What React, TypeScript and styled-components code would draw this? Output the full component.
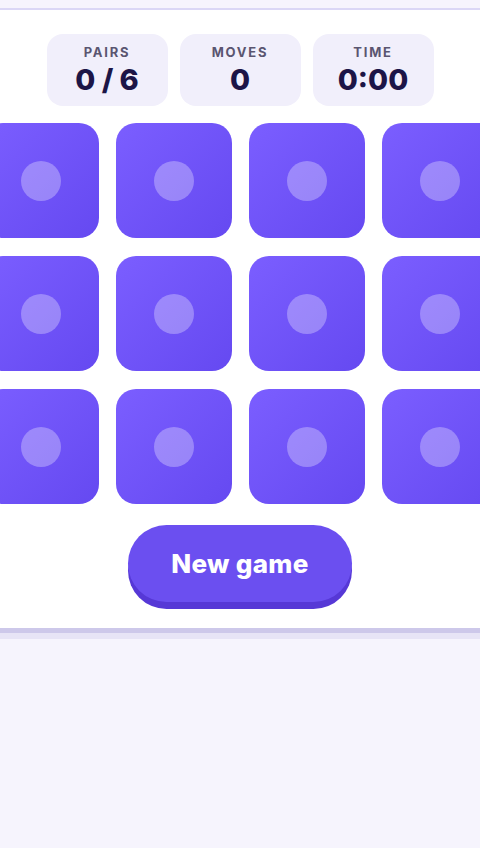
import React, { useState } from "react";
import styled, { createGlobalStyle } from "styled-components";

const GlobalStyle = createGlobalStyle`
  html, body {
    margin: 0;
    padding: 0;
    background: #f6f4fd;
    font-family: "Inter", "Noto Sans", sans-serif;
  }
`;

const Page = styled.div`
  padding-top: 8px;
  min-height: 848px;
  box-sizing: border-box;
  overflow: hidden;
`;

const Board = styled.section`
  background: #ffffff;
  border-top: 2px solid #dbd7f6;
  box-shadow: 0 5px 0 #cdc8ea, 0 11px 0 #e7e4f6;
  padding: 24px 0 26px;
  display: flex;
  flex-direction: column;
  align-items: center;
`;

const Stats = styled.div`
  display: flex;
  gap: 12px;
`;

const Stat = styled.div`
  width: 121px;
  height: 72px;
  border-radius: 16px;
  background: #f1effb;
  display: flex;
  flex-direction: column;
  align-items: center;
  justify-content: center;
  gap: 3px;
`;

const StatLabel = styled.span`
  font-size: 13px;
  font-weight: 700;
  letter-spacing: 1.8px;
  color: #5a5570;
  line-height: 16px;
`;

const StatValue = styled.span`
  font-size: 29px;
  font-weight: 800;
  color: #1c1547;
  line-height: 34px;
`;

const Grid = styled.div`
  margin-top: 17px;
  display: grid;
  grid-template-columns: repeat(4, 116px);
  grid-auto-rows: 115px;
  gap: 18px 17px;
  flex-shrink: 0;
`;

const Card = styled.button`
  border: none;
  padding: 0;
  border-radius: 20px;
  background: linear-gradient(135deg, #7b5eff 0%, #6549f1 100%);
  display: flex;
  align-items: center;
  justify-content: center;
  cursor: pointer;
`;

const Dot = styled.span`
  width: 40px;
  height: 40px;
  border-radius: 50%;
  background: rgba(255, 255, 255, 0.3);
`;

const NewGame = styled.button`
  margin-top: 21px;
  width: 224px;
  height: 77px;
  border: none;
  border-radius: 40px;
  background: #6b4ff0;
  box-shadow: 0 7px 0 #5638d6;
  color: #ffffff;
  font-family: inherit;
  font-size: 26px;
  font-weight: 800;
  letter-spacing: 0.3px;
  cursor: pointer;
`;

const App: React.FC = () => {
  const [cards] = useState(() => Array.from({ length: 12 }, (_, i) => i));

  return (
    <Page>
      <GlobalStyle />
      <Board>
        <Stats>
          <Stat>
            <StatLabel>PAIRS</StatLabel>
            <StatValue>0 / 6</StatValue>
          </Stat>
          <Stat>
            <StatLabel>MOVES</StatLabel>
            <StatValue>0</StatValue>
          </Stat>
          <Stat>
            <StatLabel>TIME</StatLabel>
            <StatValue>0:00</StatValue>
          </Stat>
        </Stats>
        <Grid>
          {cards.map((id) => (
            <Card key={id} type="button" aria-label={`Card ${id + 1}`}>
              <Dot />
            </Card>
          ))}
        </Grid>
        <NewGame type="button">New game</NewGame>
      </Board>
    </Page>
  );
};

export default App;
